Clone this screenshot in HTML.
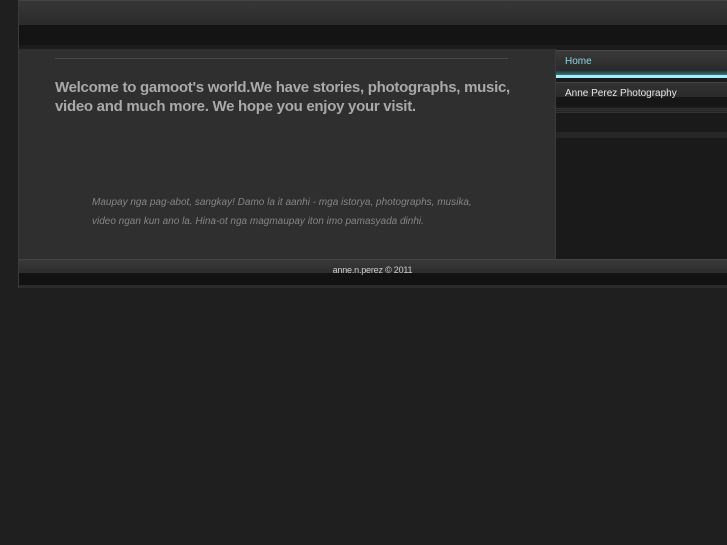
<!DOCTYPE html>
<html><head><style>
body{margin:0;background:#1f1f1f;width:727px;height:545px;overflow:hidden;font-family:"Liberation Sans",sans-serif;position:relative}
.a{position:absolute}
</style></head><body>
<div class="a" style="left:18px;top:0;width:709px;height:288px;background:#2f2f2f;border-left:1px solid #3a3a3a;box-sizing:border-box"></div>
<div class="a" style="left:19px;top:0;width:708px;height:25px;background:linear-gradient(#363636,#2b2b2b);border-top:1px solid #444;box-sizing:border-box"></div>
<div class="a" style="left:19px;top:25px;width:708px;height:20px;background:#141414"></div>
<div class="a" style="left:19px;top:45px;width:708px;height:4px;background:#1c1c1c"></div>
<div class="a" style="left:55px;top:58px;width:453px;height:1px;background:#4a4a4a"></div>
<div class="a" style="left:55px;top:78px;width:470px;font-weight:bold;font-size:15px;letter-spacing:-0.28px;line-height:19px;color:#a9a9a9">Welcome to gamoot's world.We have stories, photographs, music, video and much more. We hope you enjoy your visit.</div>
<div class="a" style="left:92px;top:193px;width:390px;font-style:italic;font-size:10px;line-height:19px;color:#858585">Maupay nga pag-abot, sangkay! Damo la it aanhi - mga istorya, photographs, musika, video ngan kun ano la. Hina-ot nga magmaupay iton imo pamasyada dinhi.</div>
<div class="a" style="left:555px;top:49px;width:172px;height:210px;background:#1a1a1a;border-left:1px solid #3a3a3a;box-sizing:border-box"></div>
<div class="a" style="left:556px;top:50px;width:171px;height:23px;background:linear-gradient(#3a3a3a,#282828);border-top:1px solid #4a4a4a;box-sizing:border-box"></div>
<div class="a" style="left:565px;top:56px;font-size:10px;color:#8fd6e0">Home</div>
<div class="a" style="left:556px;top:70px;width:171px;height:5px;background:linear-gradient(#1a2a2c,#3a7680)"></div>
<div class="a" style="left:556px;top:75px;width:171px;height:3px;background:#9ff0ff"></div>
<div class="a" style="left:556px;top:82px;width:171px;height:24px;background:linear-gradient(#333 0%,#2a2a2a 60%,#161616 61%,#161616);border-top:1px solid #444;box-sizing:border-box"></div>
<div class="a" style="left:565px;top:88px;font-size:10px;color:#e6e6e6">Anne Perez Photography</div>
<div class="a" style="left:556px;top:108px;width:171px;height:5px;background:repeating-linear-gradient(#333 0 1px,#222 1px 2px)"></div>
<div class="a" style="left:556px;top:132px;width:171px;height:6px;background:#262626"></div>
<div class="a" style="left:19px;top:259px;width:708px;height:14px;background:linear-gradient(#393939,#2d2d2d);border-top:1px solid #444;box-sizing:border-box"></div>
<div class="a" style="left:19px;top:273px;width:708px;height:12px;background:#121212"></div>
<div class="a" style="left:19px;top:285px;width:708px;height:3px;background:#2c2c2c"></div>
<div class="a" style="left:0;top:265px;width:745px;text-align:center;font-size:9px;color:#ccc;letter-spacing:-0.2px">anne.n.perez © 2011</div>
</body></html>
